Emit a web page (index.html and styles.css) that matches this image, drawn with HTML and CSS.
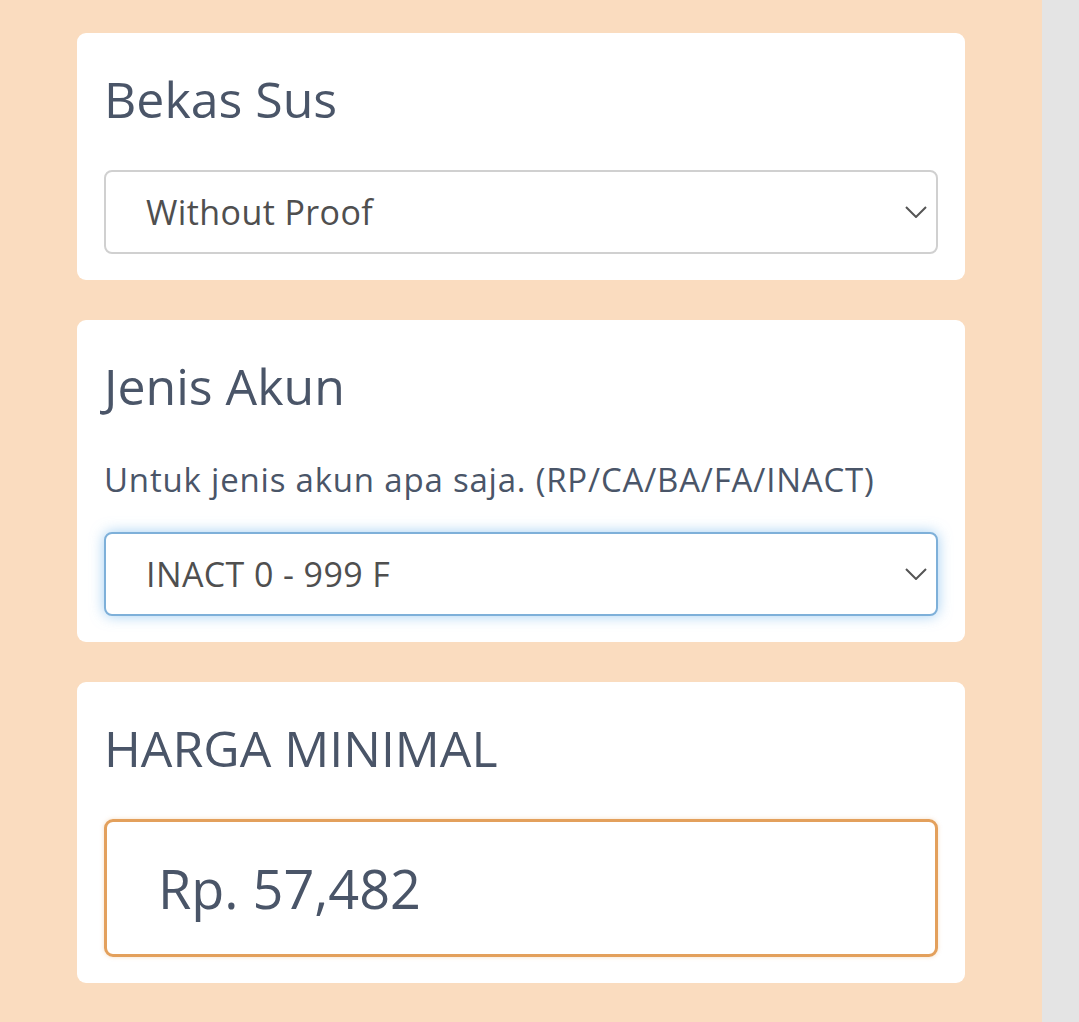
FILE: index.html
```html
<!DOCTYPE html>
<html lang="en">
<head>
    <meta charset="UTF-8">
    <meta name="viewport" content="width=device-width, initial-scale=1.0">
    <title>Order Form</title>
    <link rel="stylesheet" href="styles.css">
</head>
<body>
    <div class="page">
        <div class="main">
            <!-- Bekas Sus -->
            <div class="card">
                <h2>Bekas Sus</h2>
                <div class="select-wrap">
                    <select id="sus">
                        <option value="no-proof">Without Proof</option>
                        <option value="proof">With Proof</option>
                    </select>
                    <svg class="chevron" width="22" height="12" viewBox="0 0 22 12"><path d="M1 1 L11 11 L21 1" fill="none" stroke="#555" stroke-width="2"/></svg>
                </div>
            </div>

            <!-- Jenis Akun -->
            <div class="card">
                <h2>Jenis Akun</h2>
                <p class="hint">Untuk jenis akun apa saja. (RP/CA/BA/FA/INACT)</p>
                <div class="select-wrap">
                    <select id="akun" class="focused">
                        <option value="inact">INACT 0 - 999 F</option>
                        <option value="rp">RP</option>
                        <option value="ca">CA</option>
                    </select>
                    <svg class="chevron" width="22" height="12" viewBox="0 0 22 12"><path d="M1 1 L11 11 L21 1" fill="none" stroke="#555" stroke-width="2"/></svg>
                </div>
            </div>

            <!-- Harga -->
            <div class="card">
                <h2>HARGA MINIMAL</h2>
                <div class="price">Rp. 57,482</div>
            </div>

            <div class="card card-next"></div>
        </div>
        <div class="side"></div>
    </div>
</body>
</html>
```

FILE: styles.css
```css
body {
    font-family: "Open Sans", Arial, sans-serif;
    margin: 0;
    padding: 0;
    background-color: #e4e4e4;
    overflow: hidden;
}
.page {
    display: flex;
    height: 1022px;
}
.main {
    width: 1042px;
    background-color: #fadcbf;
    padding: 33px 0 0 77px;
    box-sizing: border-box;
}
.side {
    flex: 1;
    background: #e4e4e4;
}
.card {
    background: #fff;
    width: 888px;
    box-sizing: border-box;
    border-radius: 9px;
    padding: 34px 27px 26px;
    margin-bottom: 40px;
}
h2 {
    margin: 0 0 39px;
    font-size: 50px;
    line-height: 64px;
    font-weight: 400;
    color: #4a5568;
}
.hint {
    margin: 0 0 29px;
    font-size: 33px;
    line-height: 46px;
    letter-spacing: 0.8px;
    color: #4a5568;
}
.select-wrap {
    position: relative;
}
select {
    -webkit-appearance: none;
    appearance: none;
    width: 100%;
    height: 84px;
    padding: 0 40px;
    border: 2px solid #d0d0d0;
    border-radius: 8px;
    background: #fff;
    font-family: "Open Sans", Arial, sans-serif;
    font-size: 34px;
    letter-spacing: 0.4px;
    color: #4f4f4f;
    outline: none;
}
select.focused {
    border-color: #7eb0d9;
    box-shadow: 0 0 14px rgba(102, 175, 233, 0.6);
}
.chevron {
    position: absolute;
    right: 11px;
    top: 36px;
    pointer-events: none;
}
.price {
    height: 138px;
    box-sizing: border-box;
    border: 3px solid #e3a05c;
    border-radius: 9px;
    box-shadow: 0 0 4px rgba(227, 160, 92, 0.35);
    display: flex;
    align-items: center;
    padding: 0 0 0 51px;
    font-size: 54px;
    color: #4a5568;
}
.card-next {
    height: 80px;
}
```
